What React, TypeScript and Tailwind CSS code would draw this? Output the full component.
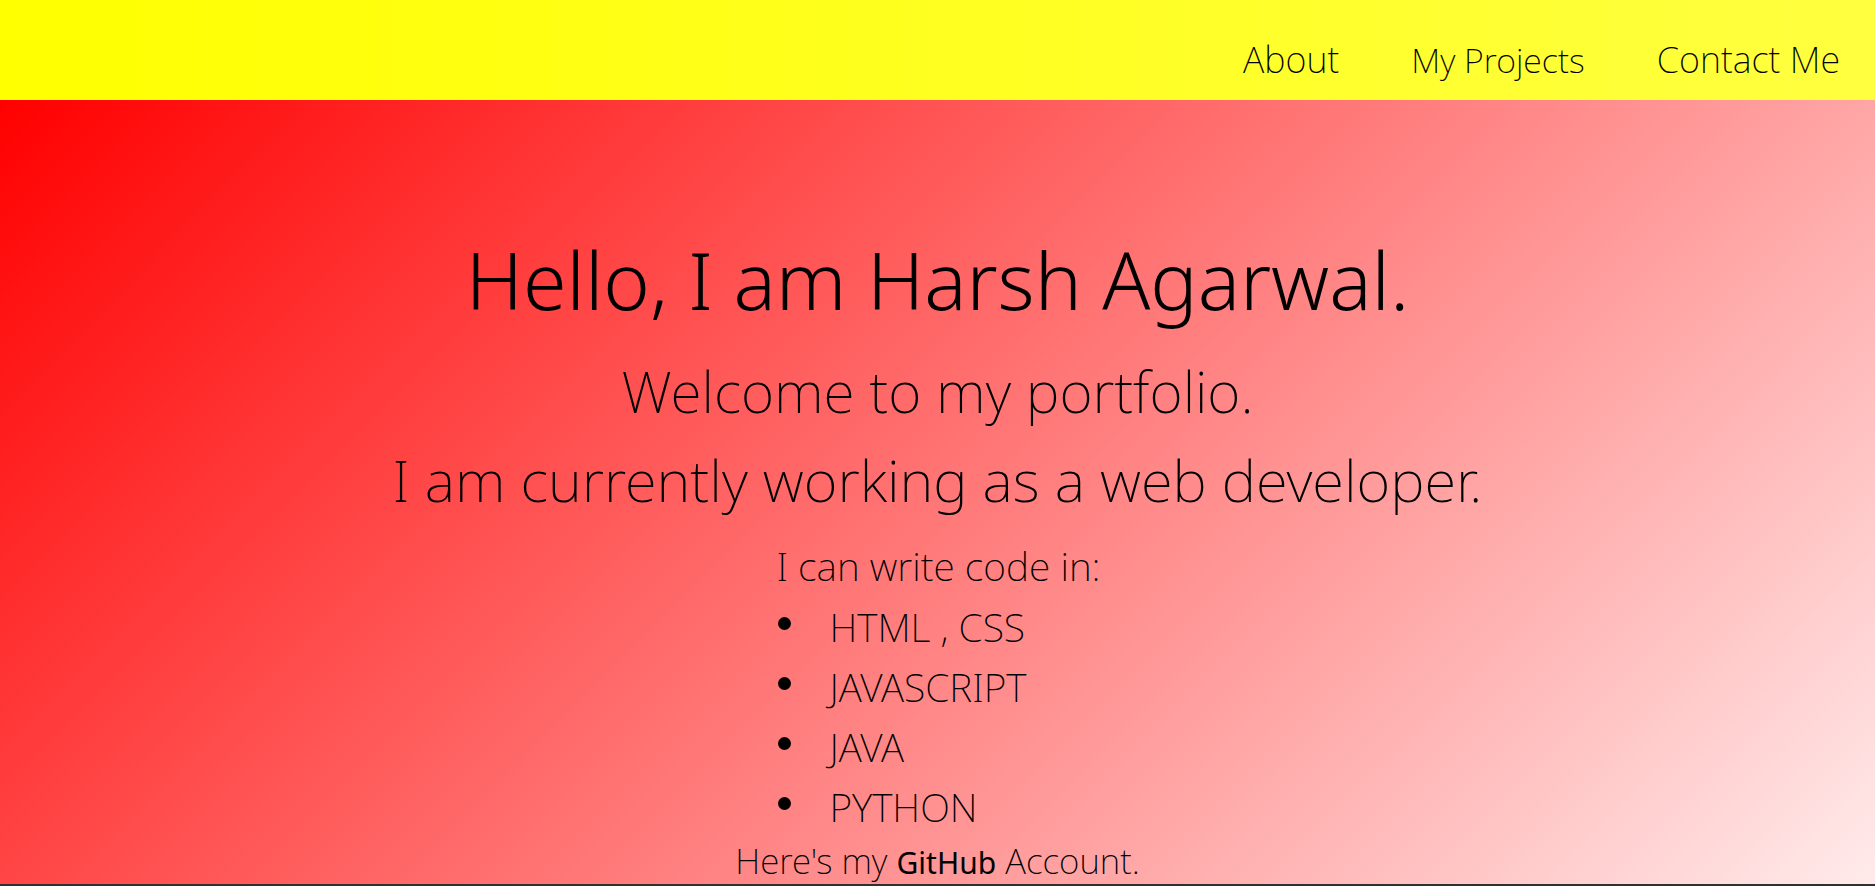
import React from 'react'

const skills = ['HTML , CSS', 'JAVASCRIPT', 'JAVA', 'PYTHON']

function Navbar() {
  return (
    <nav className="h-[100px] bg-[linear-gradient(to_right,#ffff00,#ffff40)] flex justify-end items-baseline pt-[38px] pr-[35px] gap-[72px]">
      <a href="#about" className="text-[36px] leading-[1.2] font-extralight text-black">About</a>
      <a href="#projects" className="text-[34px] leading-[1.2] font-extralight text-black">My Projects</a>
      <a href="#contact" className="text-[36px] leading-[1.2] font-extralight text-black">Contact Me</a>
    </nav>
  )
}

export default function App() {
  return (
    <div className="h-[886px] overflow-hidden font-['Noto_Sans','Liberation_Sans',sans-serif] text-black">
      <Navbar />

      <main className="h-[784px] bg-[linear-gradient(135deg,#ff0000,#ffebeb)] flex flex-col items-center text-center pt-[130px]">
        <h1 className="text-[79px] leading-[100px] font-light">Hello, I am Harsh Agarwal.</h1>
        <p className="mt-[25px] text-[57px] leading-[72px] font-extralight">Welcome to my portfolio.</p>
        <p className="mt-[17px] text-[58px] leading-[72px] font-extralight">I am currently working as a web developer.</p>

        <div className="mt-[26px] w-[322px] flex flex-col items-start">
          <p className="w-full text-[39px] leading-[48px] font-extralight whitespace-nowrap text-center">I can write code in:</p>
          <ul className="mt-[7px] text-left">
            {skills.map((s) => (
              <li key={s} className="flex items-start h-[60px]">
                <span className="ml-[1px] mt-[20px] w-[13px] h-[13px] rounded-full bg-black shrink-0"></span>
                <span className="ml-[39px] text-[39px] leading-[60px] font-extralight whitespace-nowrap">{s}</span>
              </li>
            ))}
          </ul>
        </div>

        <p className="mt-[2px] text-[35px] leading-[43px] font-extralight whitespace-nowrap">
          Here's my{' '}
          <a href="#github" className="font-normal text-[30px]">GitHub</a>{' '}
          Account.
        </p>
      </main>

      <div className="h-[2px] bg-[#30312f]"></div>
    </div>
  )
}
